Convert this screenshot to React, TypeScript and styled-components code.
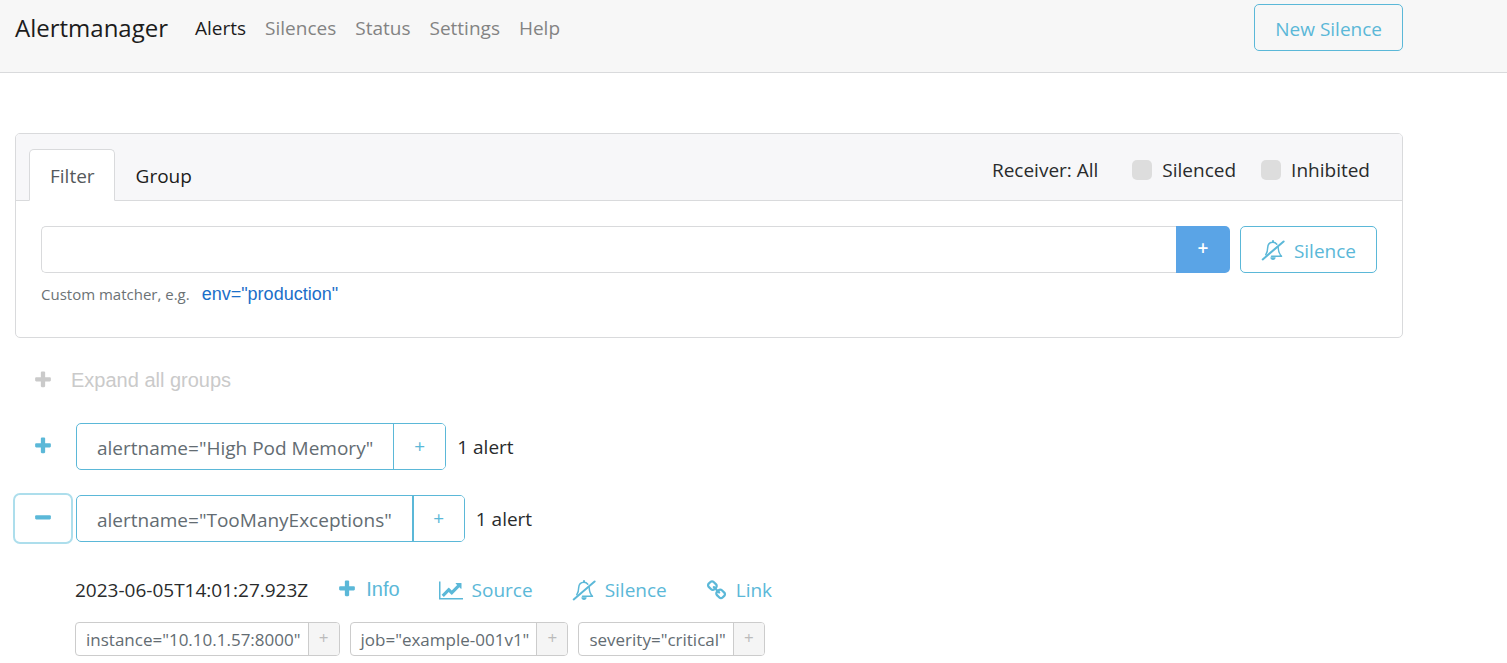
import React from "react";
import styled, { createGlobalStyle, css } from "styled-components";

const BLUE = "#5bb8d8";
const LINE = "#d9dadc";
const ARIAL = '"Liberation Sans", Arial, sans-serif';

const GlobalStyle = createGlobalStyle`
  *, *::before, *::after { box-sizing: border-box; }
  body {
    margin: 0;
    background: #fff;
    color: #292b2c;
    font: 19px/30px "Open Sans", "Segoe UI", sans-serif;
  }
  button, input { font: inherit; margin: 0; }
  button { cursor: pointer; }
`;

/* ---------- icons ---------- */

const Glyph = styled.svg<{ $w: number; $h: number }>`
  width: ${(p) => p.$w}px;
  height: ${(p) => p.$h}px;
  flex: none;
  fill: currentColor;
`;

const PlusIcon = () => (
  <Glyph $w={20} $h={20} viewBox="0 0 1792 1792" aria-hidden="true">
    <path d="M1600 736v192q0 40-28 68t-68 28h-416v416q0 40-28 68t-68 28h-192q-40 0-68-28t-28-68v-416h-416q-40 0-68-28t-28-68v-192q0-40 28-68t68-28h416v-416q0-40 28-68t68-28h192q40 0 68 28t28 68v416h416q40 0 68 28t28 68z" />
  </Glyph>
);

const MinusIcon = () => (
  <Glyph $w={20} $h={20} viewBox="0 0 1792 1792" aria-hidden="true">
    <path d="M1600 736v192q0 40-28 68t-68 28h-1216q-40 0-68-28t-28-68v-192q0-40 28-68t68-28h1216q40 0 68 28t28 68z" />
  </Glyph>
);

const ChartIcon = () => (
  <Glyph $w={24} $h={21} viewBox="0 0 2048 1792" aria-hidden="true">
    <path d="M2048 1536v128h-2048v-1536h128v1408h1920zm-128-1248v435q0 21-19.5 29.5t-35.5-7.5l-121-121-633 633q-10 10-23 10t-23-10l-233-233-416 416-192-192 585-585q10-10 23-10t23 10l233 233 464-464-121-121q-16-16-7.5-35.5t29.5-19.5h435q14 0 23 9t9 23z" />
  </Glyph>
);

const LinkIcon = () => (
  <Glyph $w={21} $h={21} viewBox="0 0 1792 1792" aria-hidden="true">
    <path d="M1520 1216q0-40-28-68l-208-208q-28-28-68-28-42 0-72 32 3 3 19 18.5t21.5 21.5 15 19 13 25.5 3.5 27.5q0 40-28 68t-68 28q-15 0-27.5-3.5t-25.5-13-19-15-21.5-21.5-18.5-19q-33 31-33 73 0 40 28 68l206 207q27 27 68 27 40 0 68-26l147-146q28-28 28-67zm-703-705q0-40-28-68l-206-207q-28-28-68-28-39 0-68 27l-147 146q-28 28-28 67 0 40 28 68l208 208q27 27 68 27 42 0 72-31-3-3-19-18.5t-21.5-21.5-15-19-13-25.5-3.5-27.5q0-40 28-68t68-28q15 0 27.5 3.5t25.5 13 19 15 21.5 21.5 18.5 19q33-31 33-73zm895 705q0 120-85 203l-147 146q-83 83-203 83-121 0-204-85l-206-207q-83-83-83-203 0-123 88-209l-88-88q-86 88-208 88-120 0-204-84l-208-208q-84-84-84-204t85-203l147-146q83-83 203-83 121 0 204 85l206 207q83 83 83 203 0 123-88 209l88 88q86-88 208-88 120 0 204 84l208 208q84 84 84 204z" />
  </Glyph>
);

const BellSlashIcon = () => (
  <Glyph $w={24} $h={21} viewBox="0 0 24 21" aria-hidden="true">
    <g fill="none" stroke="currentColor" strokeLinecap="round" strokeLinejoin="round">
      <path strokeWidth="1.5" d="M15.8 4.2C14.8 2.9 13.5 2.3 12 2.3c-3 0-5.100 2.100-5.300 5.300-.1 3.600-.7 5.600-1.900 7.100M17.200 7.400c.1 4.300 1.100 6.700 3.300 8.800H10.500" />
      <path strokeWidth="2" d="M12 1v1M1.700 19.400 22.600 1.500" />
    </g>
    <path d="M9.400 17.200h5.200c0 1.700-1.100 2.800-2.600 2.800s-2.600-1.100-2.600-2.800z" />
  </Glyph>
);

/* ---------- top bar ---------- */

const TopBar = styled.header`
  height: 73px;
  padding: 4px 104px 0 15px;
  display: flex;
  align-items: flex-start;
  background: #f7f7f7;
  border-bottom: 1px solid ${LINE};
`;

const Brand = styled.a`
  margin-right: 27px;
  font-size: 24px;
  line-height: 48px;
  color: #1c1c1c;
  text-decoration: none;
`;

const Nav = styled.nav`
  display: flex;
  flex: 1;
  gap: 19px;
`;

const NavLink = styled.a<{ $active?: boolean }>`
  line-height: 48px;
  text-decoration: none;
  color: ${(p) => (p.$active ? "#1c1c1c" : "#838383")};
`;

const OutlineButton = styled.button`
  height: 47px;
  padding: 2px 20px 0;
  display: inline-flex;
  align-items: center;
  gap: 9px;
  color: ${BLUE};
  background: transparent;
  border: 1px solid ${BLUE};
  border-radius: 5px;
  white-space: nowrap;
`;

/* ---------- filter card ---------- */

const Main = styled.main`
  padding: 60px 104px 0 15px;
`;

const Card = styled.section`
  border: 1px solid ${LINE};
  border-radius: 5px;
`;

const CardHeader = styled.div`
  height: 67px;
  padding: 15px 32px 0 13px;
  display: flex;
  background: #f7f7f9;
  border-bottom: 1px solid ${LINE};
  border-radius: 4px 4px 0 0;
`;

const Tabs = styled.div`
  flex: 1;
  display: flex;
`;

const Tab = styled.button<{ $active?: boolean }>`
  height: 52px;
  padding: 2px 19px 0 20px;
  border: 1px solid transparent;
  border-radius: 5px 5px 0 0;
  background: transparent;
  color: #1c1c1c;
  ${(p) =>
    p.$active &&
    css`
      color: #55595c;
      background: #fff;
      border-color: ${LINE} ${LINE} #fff;
    `}
`;

const Options = styled.div`
  height: 42px;
  display: flex;
  align-items: center;
`;

const Receiver = styled.span`
  margin-right: 34px;
`;

const CheckLabel = styled.label`
  display: flex;
  align-items: center;
  gap: 10px;
  & + & {
    margin-left: 25px;
  }
`;

const CheckBox = styled.input`
  appearance: none;
  width: 20px;
  height: 20px;
  background: #ddd;
  border-radius: 5px;
`;

const CardBody = styled.div`
  padding: 25px 25px 28px;
`;

const FilterRow = styled.form`
  display: flex;
`;

const MatcherInput = styled.input`
  flex: 1;
  min-width: 0;
  height: 47px;
  padding: 0 15px;
  border: 1px solid ${LINE};
  border-right: 0;
  border-radius: 5px 0 0 5px;
`;

const AddMatcher = styled.button`
  width: 54px;
  height: 47px;
  margin-right: 10px;
  padding: 0 0 3px;
  color: #fff;
  font-weight: 600;
  background: #5aa4e6;
  border: 0;
  border-radius: 0 5px 5px 0;
`;

const Hint = styled.div`
  margin-top: 6px;
  display: flex;
  gap: 12px;
  font-size: 15px;
  color: #6c7275;
`;

const HintLink = styled.button`
  padding: 0;
  border: 0;
  background: none;
  color: #1b6fc9;
  font: 18px/30px ${ARIAL};
`;

/* ---------- alert groups ---------- */

const ExpandAll = styled.button`
  margin: 27px 0 28px;
  padding: 0 18px;
  display: flex;
  align-items: center;
  gap: 18px;
  border: 0;
  background: none;
  color: #cacaca;
  font: 20px/30px ${ARIAL};
`;

const GroupRow = styled.div`
  display: flex;
  align-items: center;
  margin-bottom: 25px;
`;

const Toggle = styled.button<{ $focused?: boolean }>`
  width: 56px;
  height: 47px;
  margin-right: 5px;
  padding: 0 0 2px;
  display: flex;
  align-items: center;
  justify-content: center;
  color: ${BLUE};
  background: #fff;
  border: 0;
  border-radius: 5px;
  box-shadow: ${(p) => (p.$focused ? "0 0 0 2px #addeec" : "none")};
`;

const LabelBox = styled.div<{ $small?: boolean }>`
  display: flex;
  height: ${(p) => (p.$small ? 34 : 47)}px;
  margin-right: ${(p) => (p.$small ? 10 : 11)}px;
  font-size: ${(p) => (p.$small ? 17 : 19)}px;
  border: 1px solid ${(p) => (p.$small ? "#ccc" : BLUE)};
  border-radius: ${(p) => (p.$small ? 4 : 5)}px;
  overflow: hidden;
  white-space: nowrap;
`;

const LabelText = styled.span<{ $small?: boolean }>`
  padding: ${(p) => (p.$small ? "2px 7px 0 10px" : "2px 20px 0")};
  display: flex;
  align-items: center;
  color: #636c72;
`;

const LabelAdd = styled.button<{ $small?: boolean; $divider?: number }>`
  width: ${(p) => (p.$small ? 31 : 52)}px;
  padding: 0 0 2px;
  border: 0;
  border-left: ${(p) => p.$divider ?? 1}px solid ${(p) => (p.$small ? "#ccc" : BLUE)};
  color: ${(p) => (p.$small ? "#bbb" : BLUE)};
  background: ${(p) => (p.$small ? "#f5f5f5" : "#fff")};
`;

const Details = styled.div`
  padding: 0 0 7px 60px;
`;

const ActionRow = styled.div`
  height: 46px;
  display: flex;
  align-items: center;
`;

const Time = styled.time`
  margin-right: 29px;
`;

const actionStyle = css`
  display: inline-flex;
  align-items: center;
  gap: 9px;
  margin-right: 39px;
  padding: 0;
  border: 0;
  background: none;
  color: ${BLUE};
  text-decoration: none;
`;

const ActionButton = styled.button`
  ${actionStyle}
  padding-bottom: 2px;
  font: 20px/30px ${ARIAL};
`;

const ActionLink = styled.a`
  ${actionStyle}
`;

const Chips = styled.div`
  margin-top: 9px;
  display: flex;
`;

function Matcher({ text, small, divider }: { text: string; small?: boolean; divider?: number }) {
  return (
    <LabelBox $small={small}>
      <LabelText $small={small}>{text}</LabelText>
      <LabelAdd type="button" $small={small} $divider={divider} aria-label={`Add ${text}`}>
        +
      </LabelAdd>
    </LabelBox>
  );
}

const pages = ["Alerts", "Silences", "Status", "Settings", "Help"];
const labels = ['instance="10.10.1.57:8000"', 'job="example-001v1"', 'severity="critical"'];

export default function App() {
  return (
    <>
      <GlobalStyle />
      <TopBar>
        <Brand href="#">Alertmanager</Brand>
        <Nav>
          {pages.map((page, i) => (
            <NavLink key={page} href={`#/${page.toLowerCase()}`} $active={i === 0}>
              {page}
            </NavLink>
          ))}
        </Nav>
        <OutlineButton type="button">New Silence</OutlineButton>
      </TopBar>

      <Main>
        <Card>
          <CardHeader>
            <Tabs>
              <Tab type="button" $active>Filter</Tab>
              <Tab type="button">Group</Tab>
            </Tabs>
            <Options>
              <Receiver>Receiver: All</Receiver>
              <CheckLabel>
                <CheckBox type="checkbox" />
                Silenced
              </CheckLabel>
              <CheckLabel>
                <CheckBox type="checkbox" />
                Inhibited
              </CheckLabel>
            </Options>
          </CardHeader>
          <CardBody>
            <FilterRow onSubmit={(e) => e.preventDefault()}>
              <MatcherInput type="text" aria-label="Custom matcher" />
              <AddMatcher type="submit" aria-label="Add matcher">+</AddMatcher>
              <OutlineButton type="button">
                <BellSlashIcon />
                Silence
              </OutlineButton>
            </FilterRow>
            <Hint>
              <span>Custom matcher, e.g.</span>
              <HintLink type="button">env="production"</HintLink>
            </Hint>
          </CardBody>
        </Card>

        <ExpandAll type="button">
          <PlusIcon />
          Expand all groups
        </ExpandAll>

        <GroupRow>
          <Toggle type="button" aria-label="Expand group">
            <PlusIcon />
          </Toggle>
          <Matcher text={'alertname="High Pod Memory"'} />
          <span>1 alert</span>
        </GroupRow>
        <GroupRow>
          <Toggle type="button" aria-label="Collapse group" $focused>
            <MinusIcon />
          </Toggle>
          <Matcher text={'alertname="TooManyExceptions"'} divider={2} />
          <span>1 alert</span>
        </GroupRow>

        <Details>
          <ActionRow>
            <Time>2023-06-05T14:01:27.923Z</Time>
            <ActionButton type="button">
              <PlusIcon />
              Info
            </ActionButton>
            <ActionLink href="#source">
              <ChartIcon />
              Source
            </ActionLink>
            <ActionLink href="#silence">
              <BellSlashIcon />
              Silence
            </ActionLink>
            <ActionLink href="#link">
              <LinkIcon />
              Link
            </ActionLink>
          </ActionRow>
          <Chips>
            {labels.map((label) => (
              <Matcher key={label} text={label} small />
            ))}
          </Chips>
        </Details>
      </Main>
    </>
  );
}
